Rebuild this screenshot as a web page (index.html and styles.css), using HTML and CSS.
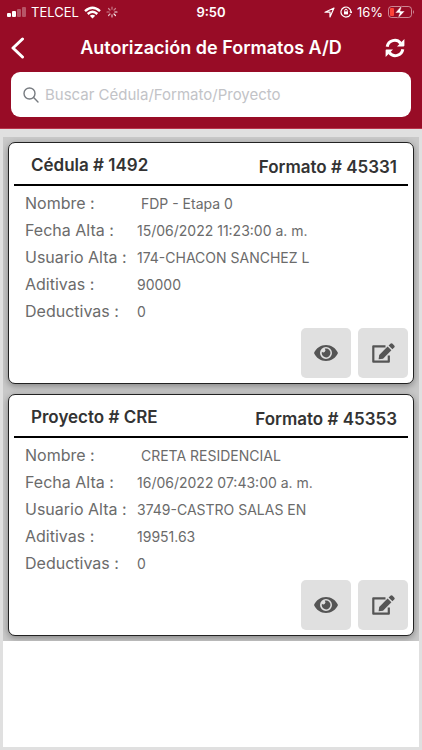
FILE: index.html
```html
<!DOCTYPE html>
<html lang="es">
<head>
<meta charset="utf-8">
<meta name="viewport" content="width=device-width, initial-scale=1">
<title>Autorización de Formatos A/D</title>
<link rel="stylesheet" href="styles.css">
</head>
<body>
<svg width="0" height="0" class="sprite" aria-hidden="true">
  <symbol id="eye" viewBox="0 0 24 16">
    <path fill-rule="evenodd" d="M12 0C6.600 0 2.200 3.200 0 8c2.200 4.800 6.600 8 12 8s9.800-3.200 12-8C21.800 3.200 17.400 0 12 0zm0 14a6 6 0 1 1 0-12 6 6 0 0 1 0 12z"/>
    <path d="M12 3.600c-.5 0-.9.100-1.200.200a2 2 0 0 1-2.900 2.900A4.400 4.400 0 1 0 12 3.600z"/>
  </symbol>
  <symbol id="edit" viewBox="0 0 23 20">
    <path d="M13.500 3.300H1.300V18.700H16.800V12.500" fill="none" stroke="#555" stroke-width="2.200" stroke-linejoin="round"/>
    <path d="M6.600 16.300L7.200 11.900 15.600 3.500 19.400 7.300 11 15.700z"/>
    <path d="M16.600 2.500L18.400.8a1.600 1.600 0 0 1 2.200 0L22.200 2.400a1.600 1.600 0 0 1 0 2.200L20.400 6.300z"/>
  </symbol>
</svg>
<header class="top">
  <div class="status">
    <div class="status-side">
      <svg class="signal" width="19" height="10" viewBox="0 0 19 10" fill="#fff">
        <rect y="6" width="4" height="4" rx="1"/><rect x="5" y="4" width="4" height="6" rx="1"/>
        <rect x="10" y="2" width="4" height="8" rx="1" opacity=".3"/><rect x="15" width="4" height="10" rx="1" opacity=".3"/>
      </svg>
      <span>TELCEL</span>
      <svg class="wifi" width="17" height="13" viewBox="0 0 17 13" fill="none" stroke="#fff" stroke-width="2.400">
        <path d="M1 5.200Q8.500-1.600 16 5.200M3.700 8Q8.500 3.700 13.300 8"/><path d="M8.500 12.500L5.800 9.800Q8.500 7.600 11.200 9.800z" fill="#fff" stroke="none"/>
      </svg>
      <svg width="12" height="12" viewBox="0 0 12 12" stroke="#fff" stroke-width="1.200" stroke-linecap="round">
        <path d="M6 1v2.200M9.500 2.500L8 4" opacity=".45"/><path d="M11 6H8.800M9.500 9.500L8 8" opacity=".9"/><path d="M6 11V8.800M2.500 9.500L4 8" opacity=".7"/><path d="M1 6h2.200M2.500 2.500L4 4" opacity=".5"/>
      </svg>
    </div>
    <span class="time">9:50</span>
    <div class="status-side status-right">
      <svg width="11" height="11" viewBox="0 0 11 11" fill="none" stroke="#fff" stroke-width="1.200" stroke-linejoin="round"><path d="M1 5.200L10 1 6 10V5.200z"/></svg>
      <svg class="lock" width="12" height="12" viewBox="0 0 12 12" fill="none" stroke="#fff" stroke-width="1.200"><path d="M10.500 8.200A5 5 0 1 1 11 6"/><path d="M9.300 5.500h3.200L11 7.600z" fill="#fff" stroke="none"/><rect x="4" y="5.400" width="4" height="3" fill="#fff" stroke="none"/><path d="M4.700 5.600V4.500a1.300 1.300 0 0 1 2.600 0v1.100" stroke-width="1"/></svg>
      <span>16%</span>
      <svg width="27" height="14" viewBox="0 0 27 14"><rect x=".5" y="1.500" width="23" height="11" rx="3" fill="none" stroke="#fff" opacity=".5"/><path d="M25 5v4q2-2 0-4z" fill="#fff" opacity=".5"/><rect x="2" y="3" width="4" height="8" rx="1" fill="#ff4338"/><path d="M14 0L7 8h4.500L9.500 14 17 6h-4.500z" fill="#fff" stroke="#980c26" stroke-width=".6"/></svg>
    </div>
  </div>
  <nav class="bar">
    <button class="plain" type="button" aria-label="Atrás">
      <svg width="14" height="22" viewBox="0 0 14 22" fill="none" stroke="#fff" stroke-width="3" stroke-linecap="round" stroke-linejoin="round"><path d="M11.500 2L2 11l9.500 9"/></svg>
    </button>
    <h1>Autorización de Formatos A/D</h1>
    <button class="plain" type="button" aria-label="Actualizar">
      <svg width="20" height="20" viewBox="0 0 20 20"><path d="M2.200 8.800A7.600 7.600 0 0 1 15.600 5.200M17.800 11.200A7.600 7.600 0 0 1 4.400 14.800" fill="none" stroke="#fff" stroke-width="3"/><path d="M19.400 1v6.600a.8.800 0 0 1-.8.800H12zM.6 19v-6.600a.8.800 0 0 1 .8-.8H8z" fill="#fff"/></svg>
    </button>
  </nav>
  <label class="search">
    <svg width="16" height="16" viewBox="0 0 16 16" fill="none" stroke="#777b80" stroke-width="1.400" stroke-linecap="round"><circle cx="6.500" cy="6.500" r="5.500"/><path d="M10.600 10.600L15 15"/></svg>
    <input type="search" placeholder="Buscar Cédula/Formato/Proyecto" aria-label="Buscar">
  </label>
</header>
<main class="content">
  <div class="list">
    <article class="card">
      <header class="card-head"><h2>Cédula # 1492</h2><h2 class="format">Formato # 45331</h2></header>
      <dl class="fields">
        <dt>Nombre :</dt><dd>&nbsp;FDP - Etapa 0</dd>
        <dt>Fecha Alta :</dt><dd>15/06/2022 11:23:00 a. m.</dd>
        <dt>Usuario Alta :</dt><dd>174-CHACON SANCHEZ L</dd>
        <dt>Aditivas :</dt><dd>90000</dd>
        <dt>Deductivas :</dt><dd>0</dd>
      </dl>
      <div class="actions">
        <button type="button" aria-label="Ver"><svg width="24" height="16"><use href="#eye"/></svg></button>
        <button type="button" aria-label="Editar"><svg width="23" height="20"><use href="#edit"/></svg></button>
      </div>
    </article>
    <article class="card">
      <header class="card-head"><h2>Proyecto # CRE</h2><h2 class="format">Formato # 45353</h2></header>
      <dl class="fields">
        <dt>Nombre :</dt><dd>&nbsp;CRETA RESIDENCIAL</dd>
        <dt>Fecha Alta :</dt><dd>16/06/2022 07:43:00 a. m.</dd>
        <dt>Usuario Alta :</dt><dd>3749-CASTRO SALAS EN</dd>
        <dt>Aditivas :</dt><dd>19951.63</dd>
        <dt>Deductivas :</dt><dd>0</dd>
      </dl>
      <div class="actions">
        <button type="button" aria-label="Ver"><svg width="24" height="16"><use href="#eye"/></svg></button>
        <button type="button" aria-label="Editar"><svg width="23" height="20"><use href="#edit"/></svg></button>
      </div>
    </article>
  </div>
</main>
</body>
</html>
```
FILE: styles.css
```css
* { box-sizing: border-box; }
body {
  margin: 0;
  min-height: 100vh;
  display: flex;
  flex-direction: column;
  background: #e0e0e0;
  font-family: Inter, "Liberation Sans", sans-serif;
  color: #6b6b6b;
}
h1, h2, dl, dd { margin: 0; }
svg { display: block; flex: none; }
.sprite { position: absolute; }
button { border: 0; padding: 0; cursor: pointer; }

.top {
  background: #980c26;
  color: #fff;
  padding: 0 11px 11px;
  border-bottom: 1px solid #b8354b;
}
.status {
  display: grid;
  grid-template-columns: 1fr auto 1fr;
  align-items: center;
  height: 24px;
  margin: 0 -4px;
  font-size: 13px;
  line-height: 24px;
}
.status-side { display: flex; align-items: center; gap: 5px; }
.status-right { justify-content: flex-end; }
.time { font-weight: 600; }

.bar {
  display: grid;
  grid-template-columns: 20px 1fr 20px;
  align-items: center;
  justify-items: start;
  height: 48px;
  padding-right: 6px;
}
.plain { background: none; }
h1 {
  justify-self: center;
  font-size: 18px;
  line-height: 24px;
  font-weight: 600;
  padding-left: 6px;
}

.search {
  display: flex;
  align-items: center;
  gap: 6px;
  height: 45px;
  padding: 0 12px;
  background: #fff;
  border-radius: 9px;
}
.search input {
  flex: 1;
  min-width: 0;
  border: 0;
  padding: 0;
  outline: 0;
  background: none;
  font: 15px/24px Inter, "Liberation Sans", sans-serif;
  color: #333;
}
.search input::placeholder { color: #c2c3c7; opacity: 1; }

.content {
  flex: 1;
  margin: 8px 3px 3px;
  background: #fff;
}
.list {
  display: grid;
  gap: 10px;
  padding: 5px;
  background: #c9c9c9;
  overflow: hidden;
}
.card {
  padding: 5px;
  background: #fff;
  border: 1px solid #222;
  border-radius: 7px;
  box-shadow: 0 2px 7px rgba(0, 0, 0, .35);
}
.card-head {
  display: flex;
  justify-content: space-between;
  height: 38px;
  padding: 5px 11px 0 17px;
  border-bottom: 2px solid #000;
}
h2 { font-size: 17px; line-height: 24px; font-weight: 600; color: #333; }
.format { padding-top: 2px; }
.fields {
  display: grid;
  grid-template-columns: 112px 1fr;
  grid-auto-rows: 27px;
  margin: 4px 0 3px;
  padding-left: 11px;
  line-height: 27px;
}
dt { font-size: 16px; white-space: nowrap; }
dd { font-size: 14px; }
.actions { display: flex; justify-content: flex-end; gap: 7px; }
.actions button {
  display: grid;
  place-items: center;
  width: 50px;
  height: 50px;
  background: #e0e0e0;
  border-radius: 5px;
}
.actions svg { fill: #555; }
```
